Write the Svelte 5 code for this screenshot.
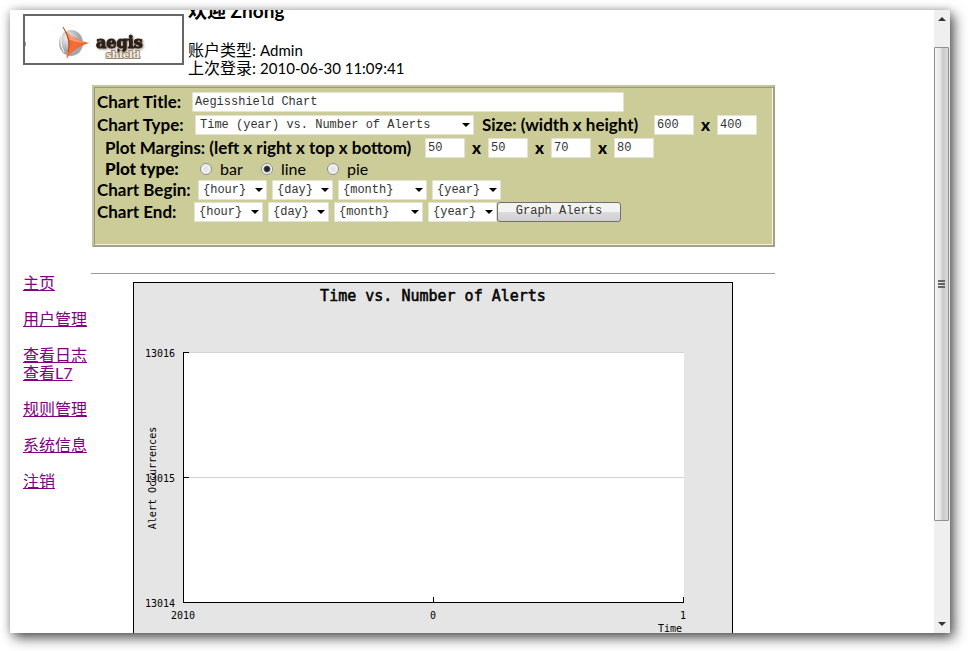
<script>
  let title = $state('Aegisshield Chart');
  let width = $state('600');
  let height = $state('400');
  let margins = $state([
    { name: 'left', value: '50' },
    { name: 'right', value: '50' },
    { name: 'top', value: '70' },
    { name: 'bottom', value: '80' }
  ]);
  let plot = $state('line');
  const plots = ['bar', 'line', 'pie'];
  const periods = ['hour', 'day', 'month', 'year'];
  const links = [
    ['主页'],
    ['用户管理'],
    ['查看日志', '查看L7'],
    ['规则管理'],
    ['系统信息'],
    ['注销']
  ];
  const yTicks = [
    { label: '13016', y: 70 },
    { label: '13015', y: 195 },
    { label: '13014', y: 320 }
  ];
  const xTicks = [
    { label: '2010', x: 50 },
    { label: '0', x: 300 },
    { label: '1', x: 550 }
  ];
</script>

{#snippet picker(id, kind, text, name)}
  <span class="picker {kind}">
    <select {id} aria-label={name}><option>{text}</option></select>
    <svg width="8" height="4" viewBox="0 0 8 4" aria-hidden="true"><path d="M0 0h8L4 4z" /></svg>
  </span>
{/snippet}

<div class="window">
  <div class="page">
    <header>
      <div class="logo">
        <svg width="157" height="47" viewBox="0 0 157 47" role="img" aria-label="aegis shield">
          <defs>
            <radialGradient id="ball" cx="35%" cy="30%">
              <stop offset="0" stop-color="#f4f4f4" />
              <stop offset="1" stop-color="#a4a6aa" />
            </radialGradient>
            <linearGradient id="flame" x1="0" y1="0" x2="1" y2="1">
              <stop offset="0" stop-color="#d85a2c" />
              <stop offset="0.5" stop-color="#f4703a" />
              <stop offset="1" stop-color="#d9481c" />
            </linearGradient>
          </defs>
          <rect x="0" y="26" width="1" height="4" fill="#999" />
          <ellipse cx="46" cy="27" rx="12" ry="13" fill="url(#ball)" />
          <path d="M37 18Q34 27 39 36" fill="none" stroke="#fff" stroke-width="1" />
          <path d="M38 11Q40 16 48 21Q55 25 64 27Q55 30 50 34Q44 38 42 43Q41 41 43 34Q45 24 38 11Z" fill="url(#flame)" />
          <path d="M41 16Q50 24 61 27Q51 26 45 24Z" fill="#ff9c68" />
          <path d="M38 11Q47 25 43 36" fill="none" stroke="#b94422" stroke-width="1" />
          <text class="brand" x="71" y="32">aegis</text>
          <text class="sub" x="81" y="42">shield</text>
        </svg>
      </div>
      <div class="account">
        <h3>欢迎 Zhong</h3>
        <p>账户类型: <span>Admin</span></p>
        <p>上次登录: <span>2010-06-30 11:09:41</span></p>
      </div>
    </header>

    <div class="columns">
      <nav>
        {#each links as group}
          <div>
            {#each group as link}<a href="#top">{link}</a>{/each}
          </div>
        {/each}
      </nav>

      <main>
        <form onsubmit={(e) => e.preventDefault()}>
          <div class="row">
            <label class="lead" for="title">Chart Title:</label>
            <input id="title" class="wide" type="text" bind:value={title} />
          </div>
          <div class="row">
            <label class="lead type" for="type">Chart Type:</label>
            {@render picker('type', 'long', 'Time (year) vs. Number of Alerts', 'Chart Type')}
            <label class="size" for="width">Size: (width x height)</label>
            <input id="width" type="text" bind:value={width} />
            <b class="by">x</b>
            <input aria-label="Height" type="text" bind:value={height} />
          </div>
          <div class="row indent">
            <label class="margins" for="left">Plot Margins: (left x right x top x bottom)</label>
            {#each margins as margin, i}
              {#if i}<b class="by">x</b>{/if}
              <input id={margin.name} aria-label="{margin.name} margin" type="text" bind:value={margin.value} />
            {/each}
          </div>
          <div class="row indent short radios" role="radiogroup" aria-labelledby="plot-type">
            <b id="plot-type">Plot type:</b>
            {#each plots as name}
              <label class={name}><input type="radio" name="plot" value={name} bind:group={plot} />{name}</label>
            {/each}
          </div>
          <div class="row dates">
            <label class="lead begin" for="begin-hour">Chart Begin:</label>
            <span class="pickers">
              {#each periods as p}{@render picker('begin-' + p, p, `{${p}}`, 'Begin ' + p)}{/each}
            </span>
          </div>
          <div class="row dates">
            <label class="lead end" for="end-hour">Chart End:</label>
            <span class="pickers">
              {#each periods as p}{@render picker('end-' + p, p, `{${p}}`, 'End ' + p)}{/each}
            </span>
            <button type="submit">Graph Alerts</button>
          </div>
        </form>

        <hr />

        <svg class="chart" width="600" height="400" viewBox="0 0 600 400" role="img" aria-label="Time vs. Number of Alerts">
          <g shape-rendering="crispEdges">
            <rect x="0.5" y="0.5" width="599" height="399" fill="#e5e5e5" stroke="#000" />
            <rect x="50" y="70" width="501" height="251" fill="#fff" />
            <path d="M51 70.5H551M51 195.5H551" stroke="#d3d3d3" />
            <path d="M50.5 70V320.5H551M50 70.5H56M50 195.5H56M300.5 315V320M550.5 315V320" fill="none" stroke="#000" />
          </g>
          <text class="heading" x="300" y="19" text-anchor="middle">Time vs. Number of Alerts</text>
          {#each yTicks as t}<text x="42" y={t.y + 5} text-anchor="end">{t.label}</text>{/each}
          {#each xTicks as t}<text x={t.x} y="337" text-anchor="middle">{t.label}</text>{/each}
          <text x="549" y="350" text-anchor="end">Time</text>
          <text transform="translate(23 196) rotate(-90)" text-anchor="middle">Alert Occurrences</text>
        </svg>
      </main>
    </div>
  </div>

  <div class="scrollbar" aria-hidden="true">
    <div class="cap"><svg width="8" height="4" viewBox="0 0 8 4"><path d="M0 4h8L4 0z" /></svg></div>
    <div class="thumb"><i></i><i></i><i></i></div>
    <div class="rest"><svg width="8" height="4" viewBox="0 0 8 4"><path d="M0 0h8L4 4z" /></svg></div>
  </div>
</div>

<style>
  :global(body) {
    background: #fff;
    overflow: hidden;
  }
  .window {
    display: flex;
    box-sizing: border-box;
    height: calc(100vh - 28px);
    margin: 10px 18px 18px 10px;
    overflow: hidden;
    background: #fff;
    box-shadow: 4px 5px 12px 0 rgba(0, 0, 0, 0.65), 0 0 8px rgba(0, 0, 0, 0.2);
    font: 16px/18px Lato, 'Noto Sans CJK SC', sans-serif;
    color: #000;
  }
  .page {
    flex: 1;
    min-width: 0;
    padding-left: 13px;
  }
  header {
    display: flex;
    gap: 4px;
    height: 75px;
  }
  .logo {
    height: 47px;
    margin-top: 4px;
    border: 2px solid #666;
  }
  .logo svg {
    display: block;
  }
  .brand {
    font: bold 16px 'DejaVu Serif', serif;
    fill: #2b211b;
    stroke: #2b211b;
    stroke-width: 1px;
    filter: drop-shadow(1px 1px 1px #998877);
  }
  .sub {
    font: bold 10px 'DejaVu Serif', serif;
    fill: #f4efe8;
    stroke: #9a8873;
    stroke-width: 2px;
    paint-order: stroke;
  }
  h3 {
    margin: -10px 0 19px;
    font-size: 19px;
    line-height: 22px;
  }
  p {
    margin: 0;
  }
  p span {
    font-size: 15px;
  }
  .columns {
    display: flex;
  }
  nav {
    flex: none;
    width: 68px;
    padding-top: 189px;
  }
  nav div {
    margin-bottom: 18px;
  }
  nav a {
    display: block;
    color: #800080;
    white-space: nowrap;
  }
  main {
    flex: 1;
    max-width: 684px;
  }
  form {
    display: flex;
    flex-direction: column;
    gap: 2px;
    box-sizing: border-box;
    height: 162px;
    margin-left: 1px;
    padding: 4px 3px;
    background: #cccc99;
    border: 2px solid;
    border-color: #c4c49e #a0a090 #a0a090 #c4c49e;
    box-shadow: inset 1px 1px #99997c, inset -1px -1px #f4f4d0;
    font-size: 17px;
    font-weight: bold;
    white-space: nowrap;
  }
  .row {
    display: flex;
    align-items: center;
    height: 21px;
  }
  .short {
    height: 18px;
  }
  .dates {
    height: 20px;
  }
  .indent {
    padding-left: 8px;
  }
  .lead {
    width: 95px;
  }
  .type {
    width: 98px;
  }
  .begin {
    width: 101px;
  }
  .end {
    width: 97px;
  }
  .size {
    width: 172px;
    margin-left: 8px;
  }
  .margins {
    width: 320px;
  }
  .by {
    width: 23px;
    text-align: center;
  }
  input[type='text'],
  select {
    box-sizing: border-box;
    height: 20px;
    margin: 0;
    border: 1px solid #e3e3d4;
    border-radius: 1px;
    background: #fff;
    color: #333;
    font: 12px 'Liberation Mono', monospace;
  }
  input[type='text'] {
    width: 40px;
    padding: 0 2px;
  }
  input.wide[type='text'] {
    width: 432px;
  }
  .picker {
    position: relative;
    display: inline-flex;
  }
  .picker svg {
    position: absolute;
    top: 8px;
    right: 4px;
    pointer-events: none;
  }
  select {
    width: 100%;
    padding: 0 4px;
    appearance: none;
  }
  .long {
    width: 279px;
  }
  .hour,
  .picker.year {
    width: 69px;
  }
  .day {
    width: 61px;
  }
  .month {
    width: 89px;
  }
  .pickers {
    display: flex;
    gap: 5px;
  }
  .radios b {
    width: 95px;
  }
  .radios label {
    display: flex;
    align-items: center;
    gap: 8px;
    width: 54px;
    margin-right: 7px;
    font-size: 16px;
    font-weight: normal;
  }
  .radios .line {
    width: 59px;
  }
  input[type='radio'] {
    box-sizing: border-box;
    width: 12px;
    height: 12px;
    margin: 0;
    appearance: none;
    border: 1px solid #8e8f8f;
    border-radius: 50%;
    background: radial-gradient(#ddd, #fff);
  }
  input[type='radio']:checked {
    background: radial-gradient(#222 0 2px, #666 3px, #fff 4px);
  }
  button {
    box-sizing: border-box;
    width: 124px;
    height: 20px;
    padding: 0 0 2px;
    border: 1px solid #707070;
    border-radius: 3px;
    background: linear-gradient(#f3f3f3 48%, #dcdcdc 52%, #cfcfcf);
    color: #333;
    font: 12px 'Liberation Mono', monospace;
  }
  hr {
    margin: 26px 0 8px;
    border: 0;
    border-top: 1px solid #999;
  }
  .chart {
    display: block;
    margin: 0 auto;
    font: 10px 'DejaVu Sans Mono', monospace;
  }
  .heading {
    font-size: 15px;
    stroke: #000;
    stroke-width: 0.5px;
  }
  .scrollbar {
    display: flex;
    flex: none;
    flex-direction: column;
    width: 16px;
    background: #efefef;
  }
  .scrollbar svg {
    display: block;
    margin: 7px auto;
    fill: #333;
  }
  .cap {
    flex: 37 1 0;
    overflow: hidden;
  }
  .thumb {
    display: flex;
    flex: 474 1 0;
    flex-direction: column;
    align-items: center;
    justify-content: center;
    gap: 1px;
    box-sizing: border-box;
    width: 15px;
    border: 1px solid #8f8f8f;
    border-radius: 1px;
    background: linear-gradient(90deg, #f6f6f6, #e8e8e8 40%, #cacaca 60%, #dadada);
  }
  .thumb i {
    width: 7px;
    height: 2px;
    background: #666;
  }
  .rest {
    display: flex;
    flex: 112 1 0;
    align-items: flex-end;
  }
</style>
